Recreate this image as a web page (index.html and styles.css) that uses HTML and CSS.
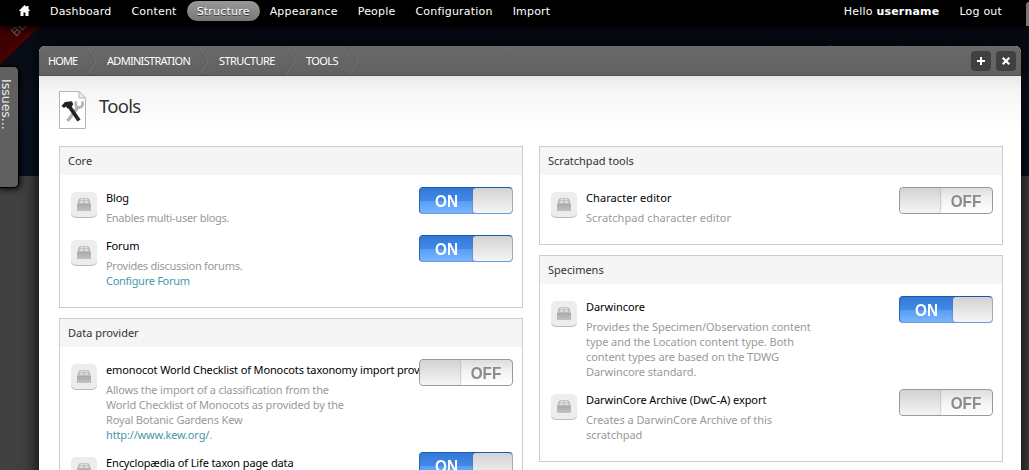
FILE: index.html
```html
<!DOCTYPE html>
<html lang="en">
<head>
<meta charset="utf-8">
<title>Tools</title>
<link rel="stylesheet" href="styles.css">
</head>
<body>
<svg class="defs" width="0" height="0" aria-hidden="true">
  <defs>
    <linearGradient id="brick-face" x1="0" y1="0" x2="0" y2="1">
      <stop offset="0" stop-color="#a9a9a9"/><stop offset="1" stop-color="#c2c2c2"/>
    </linearGradient>
    <symbol id="brick" viewBox="0 0 14 14">
      <path d="M0 6.500 1.500 1.500 3 0h8l1.500 1.500L14 6.500z" fill="#bdbdbd"/>
      <path d="M3.500.8h3v1.400h-3zM7.500.8h3v1.400h-3zM2.800 3.300h3.500v1.400H2.800zM7.700 3.300h3.500v1.400H7.700z" fill="#e6e6e6"/>
      <path d="M0 6h14v7H0z" fill="url(#brick-face)"/>
    </symbol>
  </defs>
</svg>
<div class="page">
  <svg class="ribbon" width="40" height="40" viewBox="0 26 40 40"><path d="M0 26h41L0 65z" fill="#400000"/><path d="M0 62 37 26" stroke="#5c1a1a" stroke-width=".6"/><text class="ribbon-text" transform="translate(16 37) rotate(-45)">BETA</text></svg>
  <div class="site-links"><span>Contact us</span><span>Case studies</span><span>Help</span></div>
  <div class="issues">Issues...</div>
  <header class="toolbar">
    <svg class="home" width="11" height="11" viewBox="0 0 11 11"><path d="M5.500 0 7.500 2V1h2v3L11 5.700V6H9.500v5h-3V7.500h-2V11h-3V6H0v-.3z" fill="#fff"/></svg>
    <nav class="menu">
      <a>Dashboard</a><a>Content</a><a class="active">Structure</a><a>Appearance</a><a>People</a><a>Configuration</a><a>Import</a>
    </nav>
    <div class="user"><span>Hello <b>username</b></span><span>Log out</span></div>
    <i class="drawer"></i>
  </header>
  <main class="overlay">
    <div class="crumbs">
      <span class="w1">HOME</span><svg class="chev" width="12" height="30"><path d="M1 0 11 15 1 30" /></svg>
      <span class="w2">ADMINISTRATION</span><svg class="chev" width="12" height="30"><path d="M1 0 11 15 1 30" /></svg>
      <span class="w3">STRUCTURE</span><svg class="chev" width="12" height="30"><path d="M1 0 11 15 1 30" /></svg>
      <span class="w4">TOOLS</span><svg class="chev" width="12" height="30"><path d="M1 0 11 15 1 30" /></svg>
      <div class="buttons">
        <svg width="20" height="20"><rect width="20" height="20" rx="4" fill="#404040"/><path d="M6 10h8M10 6v8" stroke="#fff" stroke-width="2"/></svg>
        <svg width="20" height="20"><rect width="20" height="20" rx="4" fill="#404040"/><path d="m6.700 6.700 6.600 6.600m0-6.600-6.600 6.600" stroke="#fff" stroke-width="2.200"/></svg>
      </div>
    </div>
    <div class="heading">
      <svg width="27" height="38" viewBox="0 0 27 38">
        <path d="M.5.500h19.500l6.500 7v30H.5z" fill="#fff" stroke="#b4b4b4"/>
        <path d="M20 .5v6.500h6.500z" fill="#eee" stroke="#b4b4b4"/>
        <path d="M8.500 30 19 16" stroke="#b5b5b5" stroke-width="3.400"/>
        <path d="M17.300 10.500c-1.600 3.500 0 6 2.700 6s4.500-2 3.300-6" fill="none" stroke="#b5b5b5" stroke-width="2.800"/>
        <path d="m10 15 10 14.500" stroke="#222" stroke-width="3.800"/>
        <path d="m2.500 15 3.500-4 7-.8 1.200 3-2 3.300-3.700 1-1.500-2L5 17z" fill="#222"/>
      </svg>
      <h1>Tools</h1>
    </div>
    <div class="columns">
      <div class="column narrow">
        <section class="panel core">
          <h2>Core</h2>
          <div class="row">
            <i class="tile"><svg width="14" height="14"><use href="#brick"/></svg></i>
            <div class="body"><h3>Blog</h3><p>Enables multi-user blogs.</p></div>
            <div class="switch on"><b>ON</b><i></i></div>
          </div>
          <div class="row">
            <i class="tile"><svg width="14" height="14"><use href="#brick"/></svg></i>
            <div class="body"><h3>Forum</h3><p>Provides discussion forums.<br><a>Configure Forum</a></p></div>
            <div class="switch on"><b>ON</b><i></i></div>
          </div>
        </section>
        <section class="panel">
          <h2>Data provider</h2>
          <div class="row tall">
            <i class="tile"><svg width="14" height="14"><use href="#brick"/></svg></i>
            <div class="body"><h3>emonocot World Checklist of Monocots taxonomy import provider</h3><p class="kew">Allows the import of a classification from the<br>World Checklist of Monocots as provided by the<br>Royal Botanic Gardens Kew<br><a>http://www.kew.org/</a>.</p></div>
            <div class="switch off"><i></i><b>OFF</b></div>
          </div>
          <div class="row">
            <i class="tile"><svg width="14" height="14"><use href="#brick"/></svg></i>
            <div class="body"><h3>Encyclopædia of Life taxon page data</h3></div>
            <div class="switch on"><b>ON</b><i></i></div>
          </div>
        </section>
      </div>
      <div class="column">
        <section class="panel scratch">
          <h2>Scratchpad tools</h2>
          <div class="row">
            <i class="tile"><svg width="14" height="14"><use href="#brick"/></svg></i>
            <div class="body"><h3>Character editor</h3><p>Scratchpad character editor</p></div>
            <div class="switch off"><i></i><b>OFF</b></div>
          </div>
        </section>
        <section class="panel specimens">
          <h2>Specimens</h2>
          <div class="row tall">
            <i class="tile"><svg width="14" height="14"><use href="#brick"/></svg></i>
            <div class="body"><h3>Darwincore</h3><p>Provides the Specimen/Observation content<br>type and the Location content type. Both<br>content types are based on the TDWG<br>Darwincore standard.</p></div>
            <div class="switch on"><b>ON</b><i></i></div>
          </div>
          <div class="row">
            <i class="tile"><svg width="14" height="14"><use href="#brick"/></svg></i>
            <div class="body"><h3>DarwinCore Archive (DwC-A) export</h3><p>Creates a DarwinCore Archive of this<br>scratchpad</p></div>
            <div class="switch off"><i></i><b>OFF</b></div>
          </div>
        </section>
      </div>
    </div>
  </main>
</div>
</body>
</html>
```
FILE: styles.css
```css
* { box-sizing: border-box; }
body { margin: 0; font: 11px/15px "Noto Sans", sans-serif; }
h1, h2, h3, p { margin: 0; font-weight: 400; }
svg { display: block; flex: none; }
.defs { position: absolute; }
.page { position: relative; width: 1029px; height: 470px; overflow: hidden; background: linear-gradient(#060a12 26px, #0a111e 90px, #07111f 176px, #414141 176px); }
.ribbon { position: absolute; left: 0; top: 26px; }
.ribbon-text { font: 12px "Liberation Sans", sans-serif; fill: #666; }
.site-links { position: absolute; top: 41px; left: 826px; display: grid; grid-template-columns: 71px 88px 40px; color: #242a32; font-size: 11px; }
.issues { position: absolute; left: -2px; top: 66px; width: 21px; height: 122px; padding: 12px 3px 0 0; border: 1px solid #000; border-radius: 0 5px 5px 0; background: #606060; color: #eee; writing-mode: vertical-rl; font: 12.5px/17px "DejaVu Sans", sans-serif; box-shadow: 1px 1px 6px #000; }
.toolbar { position: relative; z-index: 2; display: flex; align-items: flex-start; height: 26px; background: #000; color: #fff; font: 11px/20px "DejaVu Sans", sans-serif; letter-spacing: .2px; box-shadow: 0 2px 8px #000; }
.home { margin: 5px 0 0 19px; }
.menu { display: flex; padding: 1px 0 0 10px; white-space: nowrap; }
.menu a { height: 20px; padding: 1px 10px; }
.menu a.active { border-radius: 10px; background: linear-gradient(#999, #777); text-shadow: 0 1px #333; }
.user { display: flex; gap: 20px; margin-left: auto; padding: 2px 24px 0 0; }
.drawer { width: 3px; height: 24px; margin-top: 2px; border-radius: 5px 0 0 0; background: #777; }
.overlay { position: relative; width: 982px; height: 450px; margin: 20px 0 0 39px; border-radius: 6px 6px 0 0; background: #fff; box-shadow: 0 0 18px #000; }
.crumbs { display: flex; height: 30px; padding-left: 9px; border-radius: 6px 6px 0 0; border-bottom: 1px solid #4d4d4d; background: linear-gradient(#696969, #616161); color: #fff; line-height: 30px; white-space: nowrap; letter-spacing: -.6px; }
.chev { height: 29px; fill: none; stroke: #757575; filter: drop-shadow(-1px 0 #585858); }
.w1 { width: 37px; letter-spacing: -.9px; }
.w2 { width: 90px; letter-spacing: -.7px; }
.w3 { width: 65px; }
.w4 { width: 41px; }
.w2, .w3, .w4 { margin-left: 10px; }
.buttons { display: flex; gap: 5px; margin: 5px 5px 0 auto; }
.heading { display: flex; gap: 13px; height: 70px; padding: 15px 0 0 20px; background: linear-gradient(#e9e9e9, #f5f5f5 14px, #fff 52px); }
h1 { font-size: 18.5px; line-height: 30px; color: #333; letter-spacing: -.7px; }
.columns { display: grid; grid-template-columns: 464px 464px; gap: 16px; padding: 0 20px; }
.column { display: flex; flex-direction: column; gap: 10px; }
.panel { border: 1px solid #ccc; background: #fff; overflow: hidden; }
.core { height: 162px; }
.scratch { height: 99px; }
.specimens { height: 207px; }
h2 { height: 28px; margin-bottom: 12px; padding-left: 8px; background: #f5f5f5; font-size: 11px; line-height: 28px; color: #333; }
.row { position: relative; display: flex; gap: 9px; height: 48px; padding-left: 11px; white-space: nowrap; }
.row.tall { height: 93px; }
.tile { display: grid; place-items: center; width: 26px; height: 26px; margin-top: 5px; border-radius: 5px; background: #ededed; box-shadow: inset 0 -1px #bbb; }
.body { padding-top: 3px; letter-spacing: -.06px; }
.narrow h3 { letter-spacing: -.13px; }
.narrow p { letter-spacing: -.28px; }
.narrow .kew { letter-spacing: -.15px; }
.scratch .body { letter-spacing: .08px; }
h3 { font-size: 11px; line-height: 15px; color: #000; }
p { margin-top: 5px; color: #999; }
p a { color: #4797a7; }
.switch { position: absolute; right: 9px; top: 0; display: flex; width: 94px; height: 27px; border: 1px solid #999; border-radius: 4px; overflow: hidden; font: 700 17px/28px "Liberation Sans", sans-serif; text-align: center; }
.switch b { flex: 1; transform: scaleX(.9); }
.switch i { width: 40px; border-radius: 3px; background: linear-gradient(#d2d2d2, #f5f5f5); box-shadow: 0 0 2px #666; }
.on { border-color: #175bb0 #aaa #669be0 #2464b9; background: linear-gradient(#3579d6, #4189e8 50%, #569cf5 51%, #79b5ff); color: #fff; }
.on i { width: 39px; }
.off { background: linear-gradient(#ddd, #f2f2f2 45%, #fff); color: #8b8b8b; }
```
